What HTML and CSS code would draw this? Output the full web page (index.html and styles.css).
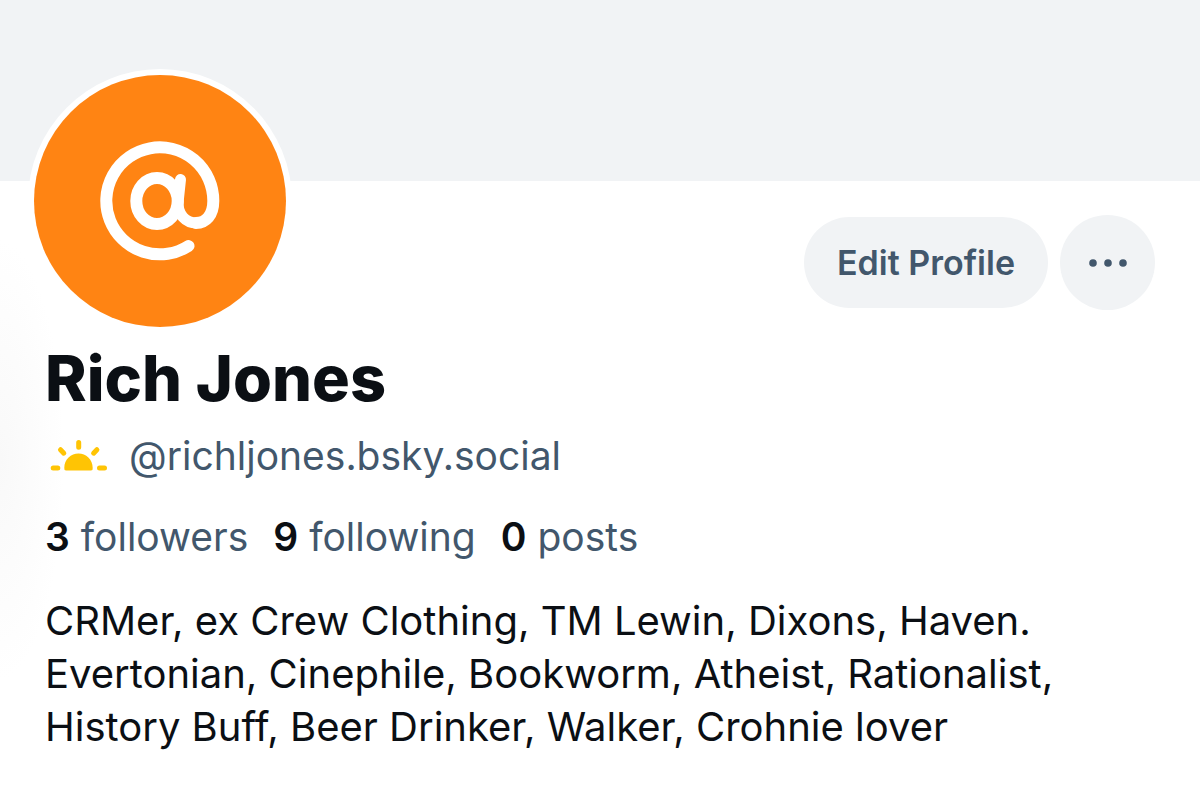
FILE: index.html
```html
<!DOCTYPE html>
<html lang="en">
<head>
<meta charset="utf-8">
<title>Rich Jones</title>
<link rel="stylesheet" href="styles.css">
</head>
<body>
<main class="profile">
  <div class="banner"></div>
  <header class="top">
    <svg class="avatar" viewBox="0 0 264 264" role="img" aria-label="Avatar">
      <circle cx="132" cy="132" r="132" fill="#fff"/>
      <circle cx="132" cy="132" r="126" fill="#ff8413"/>
      <g fill="none" stroke="#fff" stroke-width="12" stroke-linecap="round" stroke-linejoin="round">
        <ellipse cx="129" cy="132" rx="20.7" ry="23"/>
        <path stroke-width="11" d="M152.500 110.500L150 134"/>
        <path stroke-linecap="butt" stroke-width="11" d="M150 131C149 146 158 154 168.700 154"/>
        <path d="M168 154C178 154 185.300 146 185.300 132A53.500 53.500 0 1 0 160.500 177"/>
      </g>
    </svg>
    <div class="actions">
      <button class="edit" type="button">Edit Profile</button>
      <button class="more" type="button" aria-label="More options">
        <svg viewBox="0 0 40 10" width="40" height="10" fill="#42576c"><circle cx="5" cy="5" r="3.800"/><circle cx="20" cy="5" r="3.800"/><circle cx="35" cy="5" r="3.800"/></svg>
      </button>
    </div>
  </header>
  <section class="info">
    <h1 class="name">Rich Jones</h1>
    <div class="handle">
      <svg class="sun" viewBox="-1 -1 62 36" width="62" height="36" aria-hidden="true"><path d="M20 31.500Q18 31.500 18.300 29C18.300 20 25 14.500 32.500 14.500S46.700 20 46.700 29Q47 31.500 45 31.500z" fill="#ffc404"/><path d="M7.200 29H11.800M53.500 29H58.500M14.500 10.700L17.800 14.200M50.900 10.700L47.600 14.200M32.700 3.500V8.200" fill="none" stroke="#ffc404" stroke-width="5" stroke-linecap="round"/></svg>
      <span>@richljones.bsky.social</span>
    </div>
    <div class="stats">
      <a class="stat" href="#followers"><b>3</b> followers</a>
      <a class="stat" href="#following"><b>9</b> following</a>
      <span class="stat"><b>0</b> posts</span>
    </div>
    <p class="bio">CRMer, ex Crew Clothing, TM Lewin, Dixons, Haven.<br>Evertonian, Cinephile, Bookworm, Atheist, Rationalist,<br>History Buff, Beer Drinker, Walker, Crohnie lover</p>
  </section>
</main>
</body>
</html>
```
FILE: styles.css
```css
body { margin: 0; background: #fff; color: #0b0f14; font-family: Inter, sans-serif; }
.profile { background: radial-gradient(ellipse 64px 220px at 0 460px, #f9f9f9, #fff); }
.banner { height: 181px; background: #f1f3f5; }
.top { display: flex; justify-content: space-between; align-items: flex-end; margin-top: -112px; padding: 0 45px 0 28px; }
.avatar { width: 264px; height: 264px; }
.actions { display: flex; align-items: center; gap: 12px; padding-bottom: 23px; }
.edit, .more { border: 0; background: #f1f3f5; color: #42576c; font-family: inherit; cursor: pointer; }
.edit { height: 91px; padding: 0 33px; border-radius: 46px; font-size: 34px; font-weight: 600; }
.more { display: flex; align-items: center; justify-content: center; width: 95px; height: 95px; padding: 0; border-radius: 50%; }
.info { padding: 0 45px; }
.name { margin: 5px 0 0; font-size: 63px; line-height: 80px; font-weight: 800; }
.handle { display: flex; align-items: center; gap: 22px; margin-top: 12px; font-size: 39px; line-height: 52px; color: #42576c; }
.stats { display: flex; gap: 25px; margin-top: 29px; font-size: 39px; line-height: 52px; color: #42576c; }
.stat { color: inherit; text-decoration: none; }
.stat b { color: #0b0f14; font-weight: 600; }
.bio { margin: 31px 0 0; font-size: 40px; line-height: 53px; font-variant-ligatures: none; }
```
